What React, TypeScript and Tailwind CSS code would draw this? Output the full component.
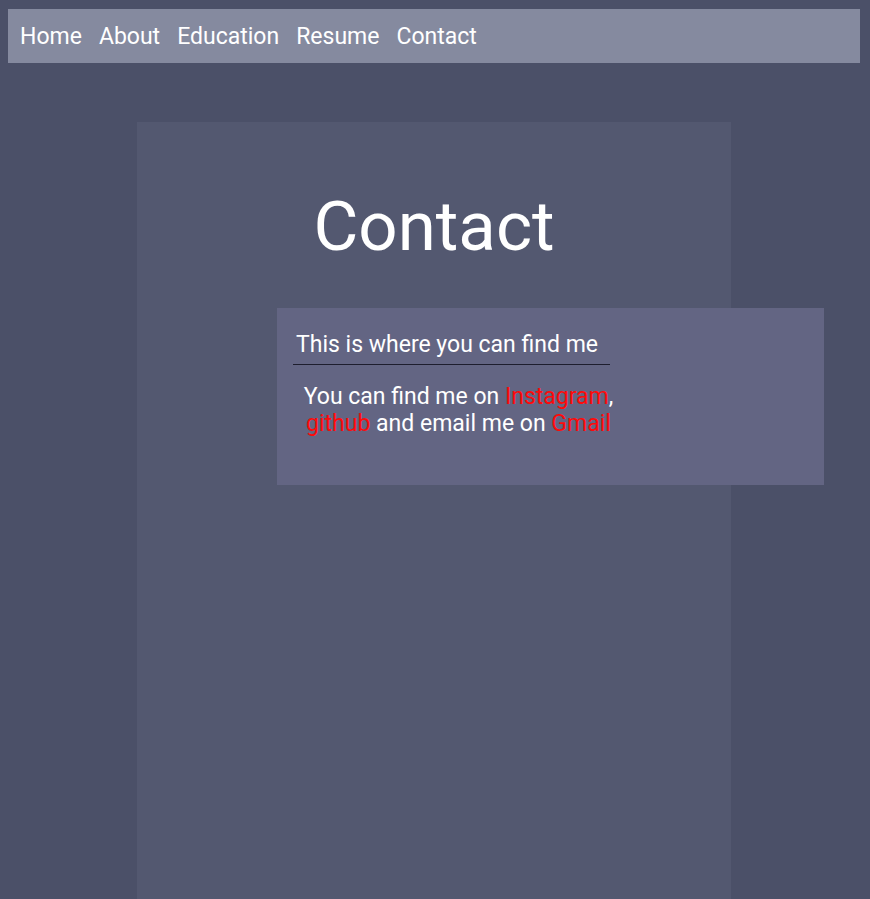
const navItems = ["Home", "About", "Education", "Resume", "Contact"];

const App = () => {
  return (
    <div
      className="min-h-[899px] bg-[#4b5068] pl-2 pr-[10px] pt-[9px] text-white"
      style={{ fontFamily: "Roboto, sans-serif" }}
    >
      <nav className="flex h-[54px] items-center gap-[17px] bg-[#858a9f] px-3 text-[23px]">
        {navItems.map((item) => (
          <a key={item} href="#" className="leading-none">
            {item}
          </a>
        ))}
      </nav>

      <main className="mx-auto mt-[59px] min-h-[777px] w-[594px] bg-[#535870] pt-[60px]">
        <h1 className="text-center text-[69px] leading-[90px]">Contact</h1>

        <section className="ml-[140px] mt-[36px] h-[177px] w-[547px] bg-[#636583] px-4 pt-[23px]">
          <h2 className="w-[317px] border-b border-[#1e1e2e] pl-[3px] pb-[5px] text-[23px] leading-[28px]">
            This is where you can find me
          </h2>
          <p className="mt-[18px] w-[331px] text-center text-[23px] leading-[27px]">
            You can find me on <a href="#" className="text-[#ff0a0a]">Instagram</a>,{" "}
            <a href="#" className="text-[#ff0a0a]">github</a> and email me on{" "}
            <a href="#" className="text-[#ff0a0a]">Gmail</a>
          </p>
        </section>
      </main>
    </div>
  );
};

export default App;
